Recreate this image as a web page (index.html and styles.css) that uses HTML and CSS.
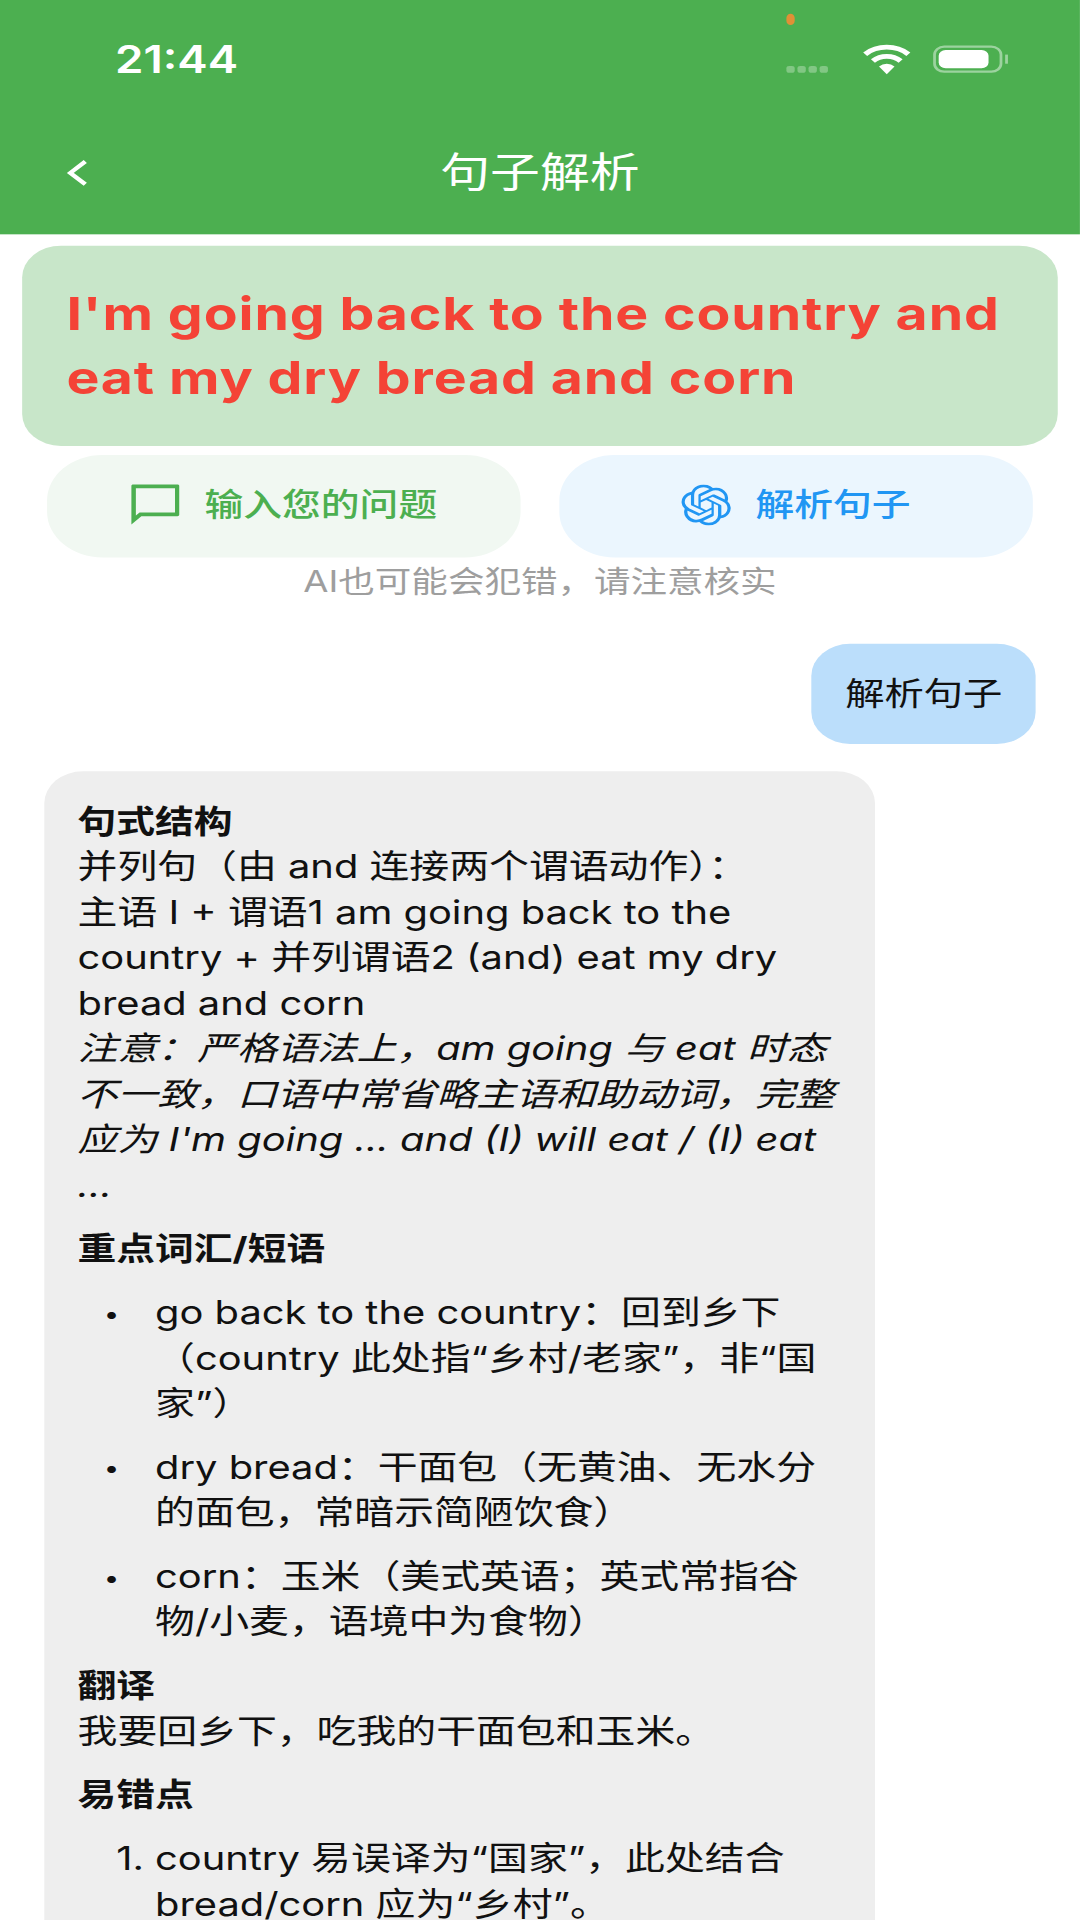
FILE: index.html
```html
<!DOCTYPE html>
<html lang="zh-CN">

<head>
    <meta charset="UTF-8">
    <meta name="viewport" content="width=device-width, initial-scale=1.0">
    <title>句子解析</title>
    <link rel="stylesheet" href="styles.css">
</head>

<body>
    <div class="screen">
        <header class="app-header">
            <div class="status-bar">
                <span class="time">21:44</span>
                <div class="status-icons">
                    <div class="signal"><i></i><i></i><i></i><i></i></div>
                    <svg class="wifi" viewBox="0 0 18 14">
                        <path d="M1.2 4.8a11.4 11.4 0 0 1 15.6 0" fill="none" stroke="#fff" stroke-width="2.1" />
                        <path d="M4 7.8a7.3 7.3 0 0 1 10 0" fill="none" stroke="#fff" stroke-width="2.1" />
                        <path d="M6.2 10.2a3.9 3.9 0 0 1 5.6 0L9 13.6z" fill="#fff" />
                    </svg>
                    <div class="battery">
                        <div class="battery-body"><div class="battery-level"></div></div>
                        <div class="battery-cap"></div>
                    </div>
                </div>
                <span class="camera-dot"></span>
            </div>
            <nav class="nav-bar">
                <svg class="back" viewBox="0 0 8 12">
                    <path d="M6.8 1L1.4 6l5.4 5" fill="none" stroke="#fff" stroke-width="1.7" />
                </svg>
                <h1 class="title">句子解析</h1>
                <span></span>
            </nav>
        </header>

        <section class="sentence-card">I'm going back to the country and<br>eat my dry bread and corn</section>

        <div class="actions">
            <div class="action action-green">
                <svg class="action-icon action-icon-chat" viewBox="2 2 20 20">
                    <path fill="#4caf50" d="M21 2.5H3.2c-.4 0-.7.3-.7.7V22l4-4H21c.4 0 .7-.3.7-.7V3.2c0-.4-.3-.7-.7-.7zm-1 13.7H5.8l-1.5 1.5V4.3H20v11.9z" />
                </svg>
                <span>输入您的问题</span>
            </div>
            <div class="action action-blue">
                <svg class="action-icon" viewBox="0 0 24 24">
                    <path fill="#2196f3" d="M22.2819 9.8211a5.9847 5.9847 0 0 0-.5157-4.9108 6.0462 6.0462 0 0 0-6.5098-2.9A6.0651 6.0651 0 0 0 4.9807 4.1818a5.9847 5.9847 0 0 0-3.9977 2.9 6.0462 6.0462 0 0 0 .7427 7.0966 5.98 5.98 0 0 0 .511 4.9107 6.051 6.051 0 0 0 6.5146 2.9001A5.9847 5.9847 0 0 0 13.2599 24a6.0557 6.0557 0 0 0 5.7718-4.2058 5.9894 5.9894 0 0 0 3.9977-2.9001 6.0557 6.0557 0 0 0-.7475-7.0729zm-9.022 12.6081a4.4755 4.4755 0 0 1-2.8764-1.0408l.1419-.0804 4.7783-2.7582a.7948.7948 0 0 0 .3927-.6813v-6.7369l2.02 1.1686a.071.071 0 0 1 .038.052v5.5826a4.504 4.504 0 0 1-4.4945 4.4944zm-9.6607-4.1254a4.4708 4.4708 0 0 1-.5346-3.0137l.142.0852 4.783 2.7582a.7712.7712 0 0 0 .7806 0l5.8428-3.3685v2.3324a.0804.0804 0 0 1-.0332.0615L9.74 19.9502a4.4992 4.4992 0 0 1-6.1408-1.6464zM2.3408 7.8956a4.485 4.485 0 0 1 2.3655-1.9728V11.6a.7664.7664 0 0 0 .3879.6765l5.8144 3.3543-2.0201 1.1685a.0757.0757 0 0 1-.071 0l-4.8303-2.7865A4.504 4.504 0 0 1 2.3408 7.872zm16.5963 3.8558L13.1038 8.364 15.1192 7.2a.0757.0757 0 0 1 .071 0l4.8303 2.7913a4.4944 4.4944 0 0 1-.6765 8.1042v-5.6772a.79.79 0 0 0-.407-.667zm2.0107-3.0231l-.142-.0852-4.7735-2.7818a.7759.7759 0 0 0-.7854 0L9.409 9.2297V6.8974a.0662.0662 0 0 1 .0284-.0615l4.8303-2.7866a4.4992 4.4992 0 0 1 6.6802 4.66zM8.3065 12.863l-2.02-1.1638a.0804.0804 0 0 1-.038-.0567V6.0742a4.4992 4.4992 0 0 1 7.3757-3.4537l-.142.0805L8.704 5.459a.7948.7948 0 0 0-.3927.6813zm1.0976-2.3654l2.602-1.4998 2.6069 1.4998v2.9994l-2.5974 1.4997-2.6067-1.4997Z" />
                </svg>
                <span>解析句子</span>
            </div>
        </div>

        <p class="note">AI也可能会犯错，请注意核实</p>

        <div class="chat">
            <div class="bubble-user">解析句子</div>

            <div class="bubble-ai">
                <p class="block"><strong>句式结构</strong><br>
                    并列句（由 and 连接两个谓语动作）：<br>
                    主语 I + 谓语1 am going back to the<br>
                    country + 并列谓语2 (and) eat my dry<br>
                    bread and corn<br>
                    <em>注意：严格语法上，am going 与 eat 时态<br>
                    不一致，口语中常省略主语和助动词，完整<br>
                    应为 I'm going ... and (I) will eat / (I) eat<br>
                    ...</em></p>

                <p class="block"><strong>重点词汇/短语</strong></p>
                <div class="list-row">
                    <span class="bullet">•</span>
                    <div>go back to the country：回到乡下<br>（country 此处指“乡村/老家”，非“国<br>家”）</div>
                </div>
                <div class="list-row">
                    <span class="bullet">•</span>
                    <div>dry bread：干面包（无黄油、无水分<br>的面包，常暗示简陋饮食）</div>
                </div>
                <div class="list-row">
                    <span class="bullet">•</span>
                    <div>corn：玉米（美式英语；英式常指谷<br>物/小麦，语境中为食物）</div>
                </div>

                <p class="block"><strong>翻译</strong><br>我要回乡下，吃我的干面包和玉米。</p>

                <p class="block"><strong>易错点</strong></p>
                <div class="list-row">
                    <span class="number">1.</span>
                    <div>country 易误译为“国家”，此处结合<br>bread/corn 应为“乡村”。</div>
                </div>
            </div>
        </div>
    </div>
</body>

</html>
```

FILE: styles.css
```css
html,
body {
    margin: 0;
    width: 1080px;
    height: 1920px;
    overflow: hidden;
    background-color: white;
}

/* The capture is a 390x844 phone screen stretched to 1080x1920 */
.screen {
    width: 390px;
    height: 844px;
    overflow: hidden;
    transform: scale(2.769, 2.275);
    transform-origin: 0 0;
    font-family: Inter, "Noto Sans CJK SC", sans-serif;
    font-size: 14px;
    line-height: 20px;
    color: #111;
    background-color: white;
}

.app-header {
    height: 103px;
    background-color: #4caf50;
    color: white;
}

.status-bar {
    position: relative;
    display: flex;
    justify-content: space-between;
    height: 47px;
    padding: 16px 26.5px 0 41.5px;
    box-sizing: border-box;
}

.time {
    font-size: 16.5px;
    font-weight: 600;
}

.status-icons {
    display: flex;
    align-items: center;
    height: 20px;
}

.signal {
    display: flex;
    gap: 1.5px;
    margin: 9px 12px 0 0;
}

.signal i {
    width: 2.5px;
    height: 3.5px;
    border-radius: 1px;
    background-color: rgba(255, 255, 255, 0.3);
}

.wifi {
    width: 18.5px;
    height: 14px;
    margin-right: 7.5px;
}

.battery {
    display: flex;
    align-items: center;
}

.battery-body {
    width: 25.5px;
    height: 12.5px;
    padding: 1.5px;
    box-sizing: border-box;
    border: 1px solid rgba(255, 255, 255, 0.45);
    border-radius: 4px;
}

.battery-level {
    width: 17.5px;
    height: 100%;
    border-radius: 2.5px;
    background-color: white;
}

.battery-cap {
    width: 1px;
    height: 4px;
    margin-left: 0.5px;
    background-color: rgba(255, 255, 255, 0.45);
}

.camera-dot {
    position: absolute;
    left: 283.5px;
    top: 6px;
    width: 3.5px;
    height: 4.5px;
    border-radius: 50%;
    background-color: #e09036;
}

.nav-bar {
    display: grid;
    grid-template-columns: 1fr auto 1fr;
    align-items: center;
    height: 56px;
    padding-top: 1px;
    box-sizing: border-box;
}

.back {
    width: 8px;
    height: 12px;
    margin-left: 24px;
}

.title {
    margin: 0;
    font-size: 18px;
    font-weight: 400;
}

.sentence-card {
    margin: 5px 8px 0;
    padding: 16px;
    border-radius: 14px;
    background-color: #c8e6c9;
    color: #f44336;
    font-size: 20px;
    font-weight: 700;
    line-height: 28px;
    letter-spacing: 0.31px;
    white-space: nowrap;
}

.actions {
    display: flex;
    gap: 13.3px;
    margin: 4px 16.6px 0 16.8px;
}

.action {
    flex: 1;
    display: flex;
    align-items: center;
    justify-content: center;
    gap: 8.5px;
    height: 45px;
    padding-bottom: 2px;
    box-sizing: border-box;
    border-radius: 20px;
    font-weight: 500;
}

.action-green {
    background-color: #f1f8f2;
    color: #4caf50;
}

.action-blue {
    background-color: #ebf6fe;
    color: #2196f3;
}

.action-icon {
    width: 18px;
    height: 18px;
}

.action-icon-chat {
    width: 18px;
    height: 19px;
}

.note {
    margin: 1px 0 0;
    text-align: center;
    font-size: 13.2px;
    line-height: 18px;
    color: #9e9e9e;
}

.chat {
    display: flex;
    flex-direction: column;
    gap: 12px;
    padding: 19px 16px 0;
}

.bubble-user {
    align-self: flex-end;
    padding: 12px 12px 12px 12.5px;
    border-radius: 14px;
    background-color: #bbdefb;
    font-size: 14.2px;
}

.bubble-ai {
    width: 300px;
    padding: 12px 12px 40px;
    box-sizing: border-box;
    border-radius: 14px;
    background-color: #eeeeee;
    font-size: 14.4px;
    white-space: nowrap;
}

.bubble-ai strong {
    font-size: 14px;
}

.block {
    margin: 0 0 8px;
}

.list-row {
    display: flex;
    margin-bottom: 8px;
}

.bullet,
.number {
    flex: none;
    width: 28px;
    box-sizing: border-box;
}

.bullet {
    padding-left: 9.5px;
    font-size: 10px;
}

.number {
    padding-right: 4px;
    text-align: right;
}
```
